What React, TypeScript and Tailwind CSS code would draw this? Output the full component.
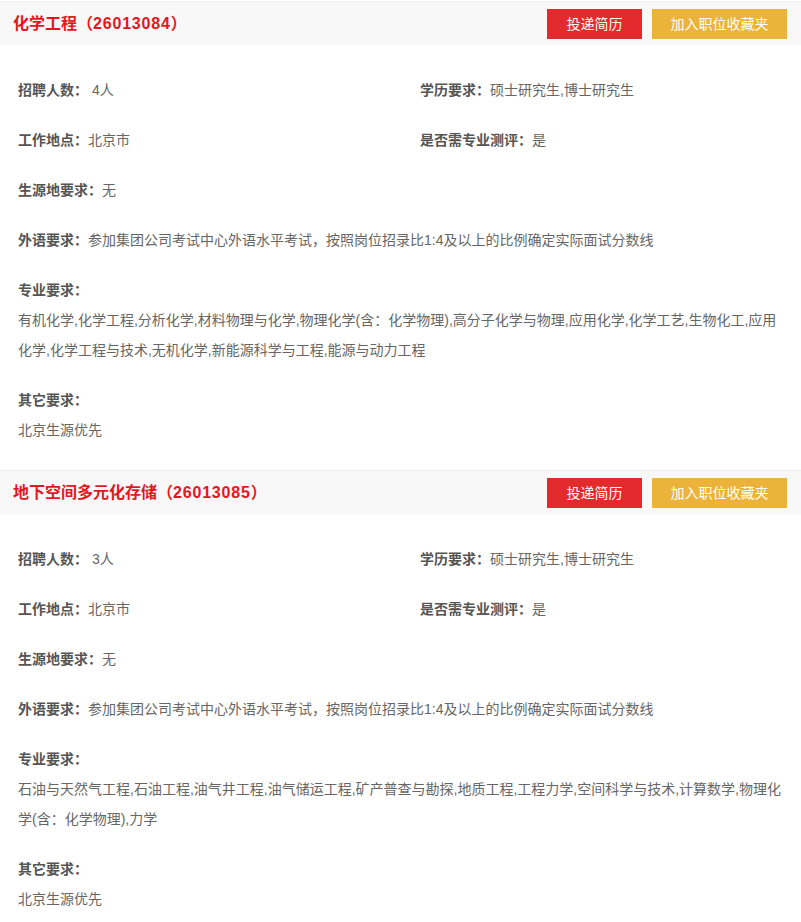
import React from "react";

type Job = {
  title: string;
  code: string;
  count: string;
  edu: string;
  place: string;
  test: string;
  origin: string;
  lang: string;
  major: string[];
  other: string;
};

const jobs: Job[] = [
  {
    title: "化学工程",
    code: "26013084",
    count: "4人",
    edu: "硕士研究生,博士研究生",
    place: "北京市",
    test: "是",
    origin: "无",
    lang: "参加集团公司考试中心外语水平考试，按照岗位招录比1:4及以上的比例确定实际面试分数线",
    major: [
      "有机化学,化学工程,分析化学,材料物理与化学,物理化学(含：化学物理),高分子化学与物理,应用化学,化学工艺,生物化工,应用",
      "化学,化学工程与技术,无机化学,新能源科学与工程,能源与动力工程",
    ],
    other: "北京生源优先",
  },
  {
    title: "地下空间多元化存储",
    code: "26013085",
    count: "3人",
    edu: "硕士研究生,博士研究生",
    place: "北京市",
    test: "是",
    origin: "无",
    lang: "参加集团公司考试中心外语水平考试，按照岗位招录比1:4及以上的比例确定实际面试分数线",
    major: [
      "石油与天然气工程,石油工程,油气井工程,油气储运工程,矿产普查与勘探,地质工程,工程力学,空间科学与技术,计算数学,物理化",
      "学(含：化学物理),力学",
    ],
    other: "北京生源优先",
  },
];

const font = { fontFamily: "'Liberation Sans', 'Noto Sans CJK SC', sans-serif" };

function Field({ label, value }: { label: string; value: string }) {
  return (
    <div className="leading-[30px] mb-[20px]">
      <span className="font-bold text-[#555]">{label}</span>
      <span className="text-[#666]">{value}</span>
    </div>
  );
}

function JobBlock({ job }: { job: Job }) {
  return (
    <div className="border-t border-[#ececec]">
      <div className="h-[43px] bg-[#f8f8f8] flex items-center justify-between pl-[13px] pr-[14px]">
        <div className="text-[16px] font-bold text-[#e4161e]">
          {job.title}（<span className="tracking-[0.8px]">{job.code}</span>）
        </div>
        <div className="flex gap-[10px]">
          <button className="w-[95px] h-[30px] bg-[#e32b2d] text-white text-[14px] leading-[30px]">
            投递简历
          </button>
          <button className="w-[135px] h-[30px] bg-[#ebb33a] text-white text-[14px] leading-[30px]">
            加入职位收藏夹
          </button>
        </div>
      </div>
      <div className="pt-[30px] pb-[25px] pl-[18px] pr-[10px] text-[14px]">
        <div className="grid grid-cols-[402px_1fr]">
          <Field label="招聘人数：" value={" " + job.count} />
          <Field label="学历要求：" value={job.edu} />
          <Field label="工作地点：" value={job.place} />
          <Field label="是否需专业测评：" value={job.test} />
        </div>
        <Field label="生源地要求：" value={job.origin} />
        <Field label="外语要求：" value={job.lang} />
        <div className="mb-[20px]">
          <div className="leading-[30px] font-bold text-[#555]">专业要求：</div>
          {job.major.map((m, i) => (
            <div key={i} className="leading-[30px] text-[#666] whitespace-nowrap">
              {m}
            </div>
          ))}
        </div>
        <div>
          <div className="leading-[30px] font-bold text-[#555]">其它要求：</div>
          <div className="leading-[30px] text-[#666]">{job.other}</div>
        </div>
      </div>
    </div>
  );
}

export default function App() {
  return (
    <div className="w-[801px] bg-white pt-px" style={font}>
      {jobs.map((j) => (
        <JobBlock key={j.code} job={j} />
      ))}
    </div>
  );
}
